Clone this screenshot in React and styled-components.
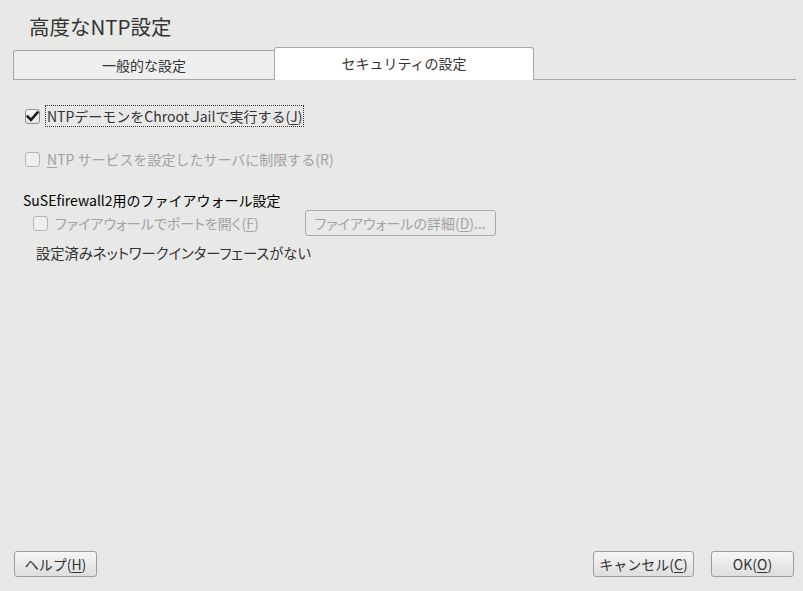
import React from "react";
import styled, { createGlobalStyle } from "styled-components";

const Global = createGlobalStyle`
  html, body { margin: 0; padding: 0; background: #e8e8e7; }
  body { font-family: "Noto Sans CJK JP", "Noto Sans", sans-serif; color: #333333; }
  * { box-sizing: border-box; }
`;

const Window = styled.div`
  width: 803px;
  height: 591px;
  display: flex;
  flex-direction: column;
  background: #e8e8e7;
  overflow: hidden;
`;

const Title = styled.h1`
  margin: 12px 0 0 29px;
  font-size: 20.5px;
  font-weight: 400;
  line-height: 28px;
  color: #333333;
`;

const TabBar = styled.div`
  display: flex;
  align-items: flex-end;
  margin: 7px 7px 0 13px;
  height: 33px;
`;

const Tab = styled.div`
  display: flex;
  align-items: center;
  justify-content: center;
  font-size: 14px;
  color: #333333;
  width: ${(p) => p.$w}px;
  height: ${(p) => (p.$active ? 33 : 30)}px;
  background: ${(p) => (p.$active ? "#ffffff" : "#efefef")};
  border: 1px solid #a6a6a6;
  border-bottom: ${(p) => (p.$active ? "none" : "1px solid #a6a6a6")};
  border-right: ${(p) => (p.$active ? "1px solid #a6a6a6" : "none")};
  border-radius: ${(p) => (p.$active ? "3px 3px 0 0" : "3px 0 0 0")};
  padding-bottom: ${(p) => (p.$active ? 2 : 0)}px;
`;

const TabLine = styled.div`
  flex: 1;
  align-self: stretch;
  border-bottom: 1px solid #a6a6a6;
`;

const Content = styled.div`
  display: flex;
  flex-direction: column;
  padding: 25px 0 0 0;
`;

const Row = styled.div`
  display: flex;
  align-items: center;
  height: ${(p) => p.$h || 22}px;
  margin-top: ${(p) => p.$mt || 0}px;
  padding-left: ${(p) => p.$pl || 0}px;
  font-size: 14px;
`;

const Box = styled.span`
  width: 15px;
  height: 15px;
  border: 1px solid ${(p) => (p.$disabled ? "#b4b4b4" : "#8e8e8e")};
  border-radius: 3px;
  background: ${(p) =>
    p.$disabled ? "#eeeeee" : "linear-gradient(#fafafa, #e6e6e6)"};
  display: flex;
  align-items: center;
  justify-content: center;
  flex: none;
`;

const Label = styled.span`
  margin-left: ${(p) => p.$ml || 7}px;
  color: ${(p) => (p.$disabled ? "#a2a2a2" : "#333333")};
  line-height: 20px;
  white-space: nowrap;
  padding: 0 1px;
  font-feature-settings: ${(p) => (p.$palt ? '"palt"' : "normal")};
  border: 1px ${(p) => (p.$focus ? "dotted #333" : "solid transparent")};
`;

const Mn = styled.u`
  text-decoration: underline;
  text-underline-offset: 2px;
  text-decoration-thickness: 1px;
`;

const GroupTitle = styled.div`
  margin: 20px 0 0 23px;
  height: 20px;
  line-height: 20px;
  font-size: 14px;
  color: #000;
`;

const ToolButton = styled.button`
  margin-left: ${(p) => p.$ml || 0}px;
  height: 26px;
  width: ${(p) => p.$w}px;
  padding: 0;
  font-family: inherit;
  font-size: 14px;
  font-feature-settings: ${(p) => (p.$palt ? '"palt"' : "normal")};
  color: ${(p) => (p.$disabled ? "#a2a2a2" : "#333333")};
  background: ${(p) =>
    p.$disabled ? "#e9e9e8" : "linear-gradient(#f6f6f6, #dedede)"};
  border: 1px solid ${(p) => (p.$disabled ? "#aaaaaa" : "#9e9e9e")};
  border-radius: 3px;
  display: flex;
  align-items: center;
  justify-content: center;
  white-space: nowrap;
`;

const Note = styled.div`
  margin: 7px 0 0 36px;
  height: 20px;
  line-height: 20px;
  font-size: 14.3px;
  color: #333333;
  font-feature-settings: "palt";
`;

const Spacer = styled.div`
  flex: 1;
`;

const Footer = styled.div`
  display: flex;
  align-items: center;
  padding: 0 9px 14px 14px;
`;

const Gap = styled.div`
  flex: 1;
`;

const Check = () => (
  <svg width="13" height="13" viewBox="0 0 13 13">
    <path d="M1.8 6.6 L5 9.8 L11.4 2.6" fill="none" stroke="#1e1e1e" strokeWidth="2.6" strokeLinecap="square" />
  </svg>
);

export default function App() {
  return (
    <Window>
      <Global />
      <Title>高度なNTP設定</Title>
      <TabBar>
        <Tab $w={261}>一般的な設定</Tab>
        <Tab $w={260} $active>セキュリティの設定</Tab>
        <TabLine />
      </TabBar>
      <Content>
        <Row $pl={25}>
          <Box><Check /></Box>
          <Label $ml={5} $focus>
            NTPデーモンをChroot Jailで実行する(<Mn>J</Mn>)
          </Label>
        </Row>
        <Row $pl={25} $mt={21}>
          <Box $disabled />
          <Label $ml={5} $disabled>
            <Mn>N</Mn>TP サービスを設定したサーバに制限する(R)
          </Label>
        </Row>
        <GroupTitle>SuSEfirewall2用のファイアウォール設定</GroupTitle>
        <Row $pl={33} $h={26} $mt={0}>
          <Box $disabled />
          <Label $ml={5} $disabled $palt>
            ファイアウォールでポートを開く(<Mn>F</Mn>)
          </Label>
          <ToolButton $disabled $palt $w={191} $ml={44}>
            ファイアウォールの詳細(<Mn>D</Mn>)...
          </ToolButton>
        </Row>
        <Note>設定済みネットワークインターフェースがない</Note>
      </Content>
      <Spacer />
      <Footer>
        <ToolButton $w={83}>
          ヘルプ(<Mn>H</Mn>)
        </ToolButton>
        <Gap />
        <ToolButton $w={101}>
          キャンセル(<Mn>C</Mn>)
        </ToolButton>
        <ToolButton $w={83} $ml={17}>
          OK(<Mn>O</Mn>)
        </ToolButton>
      </Footer>
    </Window>
  );
}
